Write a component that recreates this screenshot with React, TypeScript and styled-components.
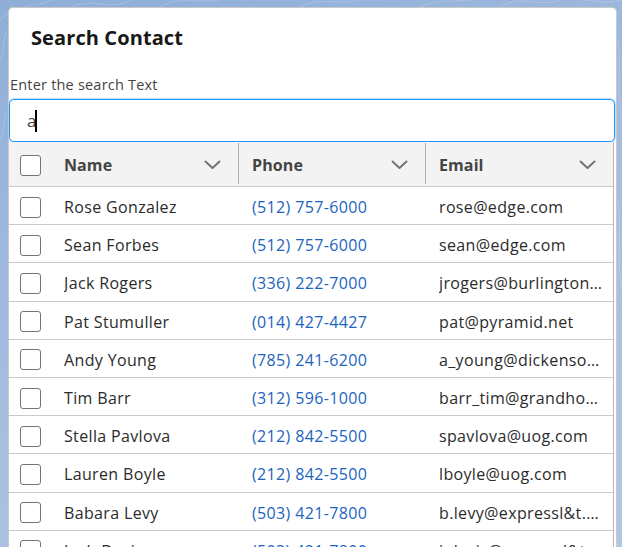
import React from "react";
import styled, { createGlobalStyle } from "styled-components";

const GlobalStyle = createGlobalStyle`
  html, body {
    margin: 0;
    padding: 0;
  }
  body {
    width: 622px;
    height: 547px;
    overflow: hidden;
    font-family: "Open Sans", "Noto Sans", sans-serif;
    background: linear-gradient(160deg, #8eaed8 0%, #a3bcdf 45%, #b3c7e3 100%);
  }
`;

const Page = styled.div`
  position: relative;
  width: 622px;
  height: 547px;
  overflow: hidden;
  padding: 7px 5px 0 8px;
  box-sizing: border-box;
`;

const BgArt = styled.svg`
  position: absolute;
  inset: 0;
  pointer-events: none;
`;

const Card = styled.section`
  position: relative;
  background: #ffffff;
  border: 1px solid #c9c9c9;
  border-bottom: none;
  border-radius: 5px 5px 0 0;
  height: 560px;
  overflow: hidden;
`;

const CardHeader = styled.header`
  padding: 15px 22px 0 22px;
  height: 50px;
  box-sizing: border-box;
`;

const Title = styled.h2`
  margin: 0;
  font-size: 20px;
  line-height: 30px;
  font-weight: 700;
  color: #181818;
  letter-spacing: 0.1px;
`;

const Label = styled.label`
  display: block;
  padding: 17px 0 0 1px;
  font-size: 14.5px;
  line-height: 20px;
  letter-spacing: 0.2px;
  color: #444444;
  height: 41px;
  box-sizing: border-box;
`;

const InputBox = styled.div`
  display: flex;
  align-items: center;
  height: 43px;
  margin-right: 1px;
  box-sizing: border-box;
  border: 1px solid #1b96ff;
  border-radius: 5px;
  box-shadow: 0 0 2px #1b96ff;
  padding-left: 17px;
  font-size: 17px;
  color: #3e3e3c;
`;

const Caret = styled.span`
  display: inline-block;
  width: 2px;
  height: 22px;
  margin-left: -1px;
  background: #000000;
`;

const Table = styled.div`
  margin-right: 2px;
  border-right: 1px solid #b8b8b8;
`;

const cols = "42px 188px 187px 1fr";

const HeaderRow = styled.div`
  display: grid;
  grid-template-columns: ${cols};
  height: 45px;
  background: #f3f3f3;
  border-bottom: 1px solid #c9c9c9;
  box-sizing: border-box;
`;

const Row = styled.div`
  display: grid;
  grid-template-columns: ${cols};
  height: 38.2px;
  border-bottom: 1px solid #c9c9c9;
  box-sizing: border-box;
`;

const CheckCell = styled.div`
  display: flex;
  align-items: center;
  padding: 3px 0 0 11px;
`;

const Box = styled.span`
  width: 21px;
  height: 21px;
  box-sizing: border-box;
  border: 1px solid #747474;
  border-radius: 3px;
  background: #ffffff;
`;

const HeadCell = styled.div<{ $divider?: boolean }>`
  display: flex;
  align-items: center;
  justify-content: space-between;
  padding: 2px 17px 0 13px;
  font-size: 16px;
  font-weight: 700;
  letter-spacing: 0.1px;
  color: #444444;
  border-right: ${(p) => (p.$divider ? "1px solid #aeaeae" : "none")};
  margin: 1px 0 2px;
`;

const Cell = styled.div<{ $link?: boolean }>`
  display: flex;
  align-items: center;
  padding: 3px 10px 0 13px;
  font-size: 16px;
  letter-spacing: 0.35px;
  color: ${(p) => (p.$link ? "#1b64c0" : "#2b2b2b")};
  min-width: 0;
`;

const Truncate = styled.span`
  overflow: hidden;
  white-space: nowrap;
  text-overflow: ellipsis;
`;

const Chevron = () => (
  <svg width="17" height="10" viewBox="0 0 17 10" fill="none">
    <path d="M1.5 1.5 L8.5 8 L15.5 1.5" stroke="#747474" strokeWidth="2" strokeLinecap="round" strokeLinejoin="round" />
  </svg>
);

const contacts = [
  ["Rose Gonzalez", "(512) 757-6000", "rose@edge.com"],
  ["Sean Forbes", "(512) 757-6000", "sean@edge.com"],
  ["Jack Rogers", "(336) 222-7000", "jrogers@burlington.com"],
  ["Pat Stumuller", "(014) 427-4427", "pat@pyramid.net"],
  ["Andy Young", "(785) 241-6200", "a_young@dickenson.com"],
  ["Tim Barr", "(312) 596-1000", "barr_tim@grandhotels.com"],
  ["Stella Pavlova", "(212) 842-5500", "spavlova@uog.com"],
  ["Lauren Boyle", "(212) 842-5500", "lboyle@uog.com"],
  ["Babara Levy", "(503) 421-7800", "b.levy@expressl&t.net"],
  ["Josh Davis", "(503) 421-7800", "j.davis@expressl&t.net"],
];

export default function App() {
  return (
    <>
      <GlobalStyle />
      <Page>
        <BgArt width="622" height="547" viewBox="0 0 622 547">
          <g fill="none" stroke="#ffffff" strokeOpacity="0.18" strokeWidth="1">
            <path d="M0 20 C20 0 40 10 60 -5" />
            <path d="M70 8 C90 -4 110 12 130 0" />
            <path d="M160 7 C180 -6 200 6 230 -2" />
            <path d="M300 7 C320 -4 340 6 360 0" />
            <path d="M420 7 C440 -3 460 4 480 -2" />
            <path d="M500 7 C520 -6 540 8 560 0 C580 -4 600 6 622 0" />
            <path d="M0 60 C5 50 2 40 7 30" />
            <path d="M0 140 C6 130 3 120 7 110" />
            <path d="M618 40 C622 60 616 90 622 120" />
            <path d="M618 200 C622 230 616 260 622 290" />
          </g>
        </BgArt>
        <Card>
          <CardHeader>
            <Title>Search Contact</Title>
          </CardHeader>
          <Label>Enter the search Text</Label>
          <InputBox>
            a<Caret />
          </InputBox>
          <Table>
            <HeaderRow>
              <CheckCell>
                <Box />
              </CheckCell>
              <HeadCell $divider>
                Name
                <Chevron />
              </HeadCell>
              <HeadCell $divider>
                Phone
                <Chevron />
              </HeadCell>
              <HeadCell>
                Email
                <Chevron />
              </HeadCell>
            </HeaderRow>
            {contacts.map(([name, phone, email]) => (
              <Row key={name}>
                <CheckCell>
                  <Box />
                </CheckCell>
                <Cell>
                  <Truncate>{name}</Truncate>
                </Cell>
                <Cell $link>
                  <Truncate>{phone}</Truncate>
                </Cell>
                <Cell>
                  <Truncate>{email}</Truncate>
                </Cell>
              </Row>
            ))}
          </Table>
        </Card>
      </Page>
    </>
  );
}
